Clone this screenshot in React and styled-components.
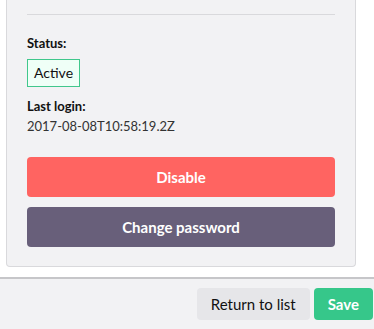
import React from 'react';
import styled, { createGlobalStyle } from 'styled-components';

const GlobalStyle = createGlobalStyle`
  html, body {
    margin: 0;
    padding: 0;
    background: #ffffff;
    font-family: Lato, 'Liberation Sans', sans-serif;
  }
`;

const Page = styled.div`
  display: flex;
  flex-direction: column;
  width: 374px;
  height: 329px;
  overflow: hidden;
`;

const CardRow = styled.div`
  padding: 0 18px 0 6px;
  height: 277px;
  box-sizing: border-box;
`;

const Card = styled.section`
  background: #f2f2f4;
  border: 1px solid #d9d9dc;
  border-top: none;
  border-radius: 0 0 4px 4px;
  padding: 14px 20px 19px;
  display: flex;
  flex-direction: column;
`;

const Divider = styled.hr`
  margin: 0 0 20px;
  border: none;
  border-top: 1px solid #d9d9dc;
`;

const Label = styled.div`
  font-size: 13px;
  line-height: 16px;
  font-weight: 700;
  color: #111;
  margin-top: ${p => p.$gap || 0}px;
`;

const Value = styled.div`
  font-size: 13px;
  line-height: 18px;
  color: #333;
  margin-top: 3px;
`;

const Badge = styled.span`
  align-self: flex-start;
  margin-top: 8px;
  padding: 0 6px;
  line-height: 26px;
  font-size: 14px;
  color: #111;
  background: #effff7;
  border: 1px solid #40c78c;
`;

const Actions = styled.div`
  margin-top: 22px;
  display: flex;
  flex-direction: column;
  gap: 10px;
`;

const WideButton = styled.button`
  height: 40px;
  border: none;
  border-radius: 4px;
  background: ${p => p.$bg};
  color: #fff;
  font-family: inherit;
  font-size: 15px;
  font-weight: 700;
`;

const Footer = styled.footer`
  flex: 1;
  background: #f2f2f4;
  border-top: 2px solid #c6c6c9;
  display: flex;
  justify-content: flex-end;
  align-items: flex-start;
  gap: 4px;
  padding: 9px 1px 0 0;
`;

const FooterButton = styled.button`
  height: 32px;
  padding: 0 14px;
  border: none;
  border-radius: 4px;
  font-family: inherit;
  font-size: 15px;
  background: ${p => (p.$primary ? '#36c78a' : '#e6e6e9')};
  color: ${p => (p.$primary ? '#fff' : '#111')};
  font-weight: ${p => (p.$primary ? 700 : 400)};
`;

export default function App() {
  return (
    <>
      <GlobalStyle />
      <Page>
        <CardRow>
          <Card>
            <Divider />
            <Label>Status:</Label>
            <Badge>Active</Badge>
            <Label $gap={11}>Last login:</Label>
            <Value>2017-08-08T10:58:19.2Z</Value>
            <Actions>
              <WideButton $bg="#ff6461">Disable</WideButton>
              <WideButton $bg="#685f7a">Change password</WideButton>
            </Actions>
          </Card>
        </CardRow>
        <Footer>
          <FooterButton>Return to list</FooterButton>
          <FooterButton $primary>Save</FooterButton>
        </Footer>
      </Page>
    </>
  );
}
